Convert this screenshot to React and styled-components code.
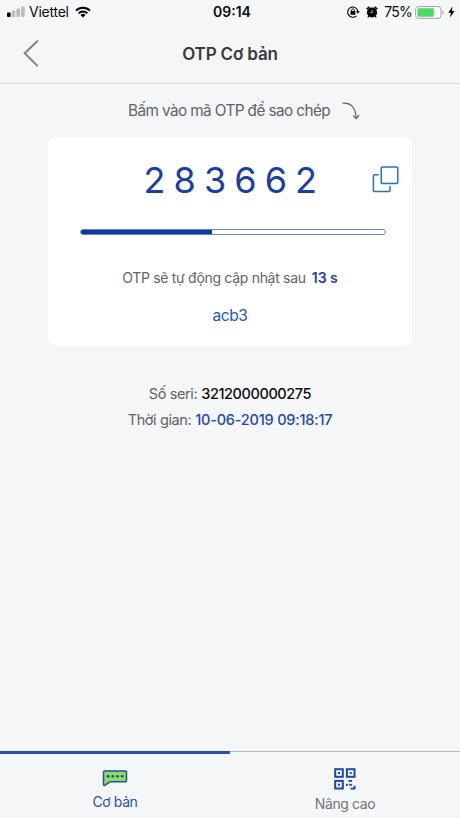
import { styled, createGlobalStyle } from "styled-components";

const GlobalStyle = createGlobalStyle`
  * {
    box-sizing: border-box;
  }

  body {
    margin: 0;
    background: #f4f6f8;
    font-family: Inter, "Noto Sans", sans-serif;
  }
`;

const Screen = styled.div`
  width: 100%;
  height: 100vh;
  overflow: hidden;

  display: flex;
  flex-direction: column;

  background: #f4f6f8;
`;

const StatusBar = styled.div`
  height: 24px;
  flex-shrink: 0;
  padding: 0 5px 0 7px;

  display: grid;
  grid-template-columns: 1fr auto 1fr;
  align-items: center;

  color: #0b0b0c;
  white-space: nowrap;
`;

const StatusGroup = styled.div`
  display: flex;
  align-items: center;
  justify-content: ${(props) => props.$align};

  svg {
    display: block;
    flex-shrink: 0;
  }
`;

const StatusGap = styled.span`
  width: ${(props) => props.$size};
`;

const Carrier = styled.span`
  margin: 0 6px 0 4px;
  font-size: 14px;
  line-height: 24px;
  letter-spacing: -0.25px;
`;

const Clock = styled.span`
  margin-left: 2px;
  font-size: 14px;
  font-weight: 600;
  line-height: 24px;
`;

const Percent = styled.span`
  margin: 0 3px 0 6px;
  font-size: 14px;
  line-height: 24px;
  letter-spacing: -0.8px;
`;

const Header = styled.div`
  height: 60px;
  flex-shrink: 0;
  padding: 0 22px;

  display: grid;
  grid-template-columns: 1fr auto 1fr;
  align-items: center;

  border-bottom: 1px solid #d9dce0;
`;

const BackButton = styled.button`
  padding: 0;
  border: none;
  background: none;
  justify-self: start;

  svg {
    display: block;
  }
`;

const Title = styled.div`
  color: #38393c;
  font-size: 17px;
  font-weight: 600;
  line-height: 24px;
  letter-spacing: -0.15px;
`;

const Body = styled.div`
  flex: 1;
  display: flex;
  flex-direction: column;
  align-items: center;
`;

const Hint = styled.div`
  height: 53px;
  padding-left: 28px;

  display: flex;
  align-items: center;
  gap: 12px;

  color: #626367;
  font-size: 15.3px;
  letter-spacing: -0.58px;
  white-space: nowrap;
`;

const Card = styled.div`
  width: 364px;
  height: 209px;

  display: flex;
  flex-direction: column;
  align-items: center;

  border-radius: 9px;
  background: #ffffff;
`;

const CodeRow = styled.div`
  width: 100%;
  height: 85px;
  padding: 0 13px 0 95.5px;

  display: flex;
  align-items: center;
  justify-content: space-between;
`;

const Code = styled.div`
  color: #1840a0;
  font-size: 36px;
  font-weight: 400;
  line-height: 44px;
  letter-spacing: 8.1px;
`;

const Track = styled.div`
  width: 306px;
  height: 6px;
  margin-top: 7px;
  margin-left: 5px;
  flex-shrink: 0;
  overflow: hidden;

  border: 1px solid #6b85c4;
  border-radius: 3px;
  background: #ffffff;
`;

const Bar = styled.div`
  height: 100%;
  background: #0d38a0;
  box-shadow: 0 0 0 1px #0d38a0;
`;

const Countdown = styled.div`
  margin-top: 33px;

  display: flex;
  gap: 6px;

  color: #626367;
  font-size: 14px;
  line-height: 20px;
  letter-spacing: -0.3px;
  white-space: nowrap;
`;

const Seconds = styled.span`
  color: #1d40a4;
  font-weight: 600;
  letter-spacing: 0;
`;

const Account = styled.div`
  margin-top: 18px;
  color: #2159c0;
  font-size: 15.5px;
  line-height: 20px;
  letter-spacing: -0.4px;
`;

const InfoList = styled.div`
  margin-top: 35px;
  display: flex;
  flex-direction: column;
  align-items: center;
`;

const InfoRow = styled.div`
  display: flex;
  gap: 4px;

  color: #626367;
  font-size: 14.5px;
  font-weight: 400;
  line-height: 26px;
  letter-spacing: -0.4px;
  white-space: nowrap;
`;

const InfoValue = styled.span`
  color: ${(props) => props.$color};
  font-weight: 500;
  letter-spacing: ${(props) => props.$spacing};
`;

const TabBar = styled.div`
  height: 67px;
  flex-shrink: 0;
  display: grid;
  grid-template-columns: 1fr 1fr;
`;

const Tab = styled.div`
  display: flex;
  flex-direction: column;
  align-items: center;

  border-top: ${(props) => (props.$active ? "3px solid #2a50ae" : "1px solid #b4b8bd")};
  color: ${(props) => (props.$active ? "#2a4fae" : "#747579")};
  font-size: 14px;
  line-height: 20px;
  letter-spacing: -0.4px;
`;

const TabIcon = styled.div`
  height: ${(props) => (props.$active ? "38px" : "42px")};
  padding-top: 16px;

  svg {
    display: block;
  }
`;

function SignalIcon() {
  return (
    <svg width="18" height="12" viewBox="0 0 18 12">
      <rect x="0" y="6.5" width="3.6" height="4.5" rx="1" fill="#000" />
      <rect x="4.7" y="4.5" width="3.6" height="6.5" rx="1" fill="#b9bbbf" />
      <rect x="9.4" y="2.5" width="3.6" height="8.5" rx="1" fill="#b9bbbf" />
      <rect x="14.1" y="0.5" width="3.6" height="10.5" rx="1" fill="#b9bbbf" />
    </svg>
  );
}

function WifiIcon() {
  return (
    <svg width="16" height="12" viewBox="0 0 16 12" fill="none" stroke="#000" strokeWidth="2">
      <path d="M1 4.6a10 10 0 0 1 14 0" />
      <path d="M3.6 7.4a6.2 6.2 0 0 1 8.8 0" />
      <path d="M8 11.6 5.5 9.1a3.5 3.5 0 0 1 5 0Z" fill="#000" stroke="none" />
    </svg>
  );
}

function LockRotationIcon() {
  return (
    <svg width="13" height="12" viewBox="0 0 13 12" fill="none" stroke="#000">
      <path d="M9.4 9.8a5.1 5.1 0 1 1 1.5-4.2" strokeWidth="1.1" />
      <path d="M8.9 5.2h3.9l-1.9 2.6Z" fill="#000" stroke="none" />
      <rect x="3.5" y="5.1" width="4.8" height="3.7" rx="0.5" fill="#000" stroke="none" />
      <path d="M4.5 5.4V4.3a1.4 1.4 0 0 1 2.8 0v1.1" strokeWidth="0.9" />
    </svg>
  );
}

function AlarmIcon() {
  return (
    <svg width="12" height="12" viewBox="0 0 12 12">
      <circle cx="6" cy="6.4" r="5" />
      <path d="M0.7 3.2 3.4 0.9M11.3 3.2 8.6 0.9" stroke="#000" strokeWidth="1.6" />
      <path d="M2.8 10 1.8 11.4M9.2 10l1 1.4" stroke="#000" strokeWidth="1.2" />
      <path d="M6.2 3.8v2.8H4.3" fill="none" stroke="#f4f6f8" strokeWidth="0.7" />
    </svg>
  );
}

function BatteryIcon() {
  return (
    <svg width="29" height="13" viewBox="0 0 29 13">
      <rect x="0.6" y="0.6" width="25.4" height="11.8" rx="3" fill="#fff" stroke="#a0a2a6" strokeWidth="1" />
      <path d="M4 2.2h14.8v8.6H4a1.7 1.7 0 0 1-1.7-1.7V3.9A1.7 1.7 0 0 1 4 2.2Z" fill="#4cd964" />
      <path d="M27.3 4.4q1.3.7 1.3 2.1t-1.3 2.1Z" fill="#a0a2a6" />
    </svg>
  );
}

function BoltIcon() {
  return (
    <svg width="7" height="12" viewBox="0 0 7 12">
      <path d="M4.6 0.4 0.3 6.8h2.6L2 11.6l4.6-6.7H3.9Z" />
    </svg>
  );
}

function BackIcon() {
  return (
    <svg width="17" height="28" viewBox="0 0 17 28" fill="none">
      <path d="M15.2 1.3 2.7 13.3l12.5 12.3" stroke="#808184" strokeWidth="2" strokeLinecap="round" />
    </svg>
  );
}

function CurvedArrowIcon() {
  return (
    <svg width="18" height="18" viewBox="0 0 18 18" fill="none" stroke="#626367" strokeWidth="1.2" strokeLinecap="round">
      <path d="M1 1.2c7-1 12.7 4 13.2 15" />
      <path d="M11.4 13.9l2.8 2.7 2.6-3.1" />
    </svg>
  );
}

function CopyIcon() {
  return (
    <svg width="27" height="27" viewBox="0 0 27 27" fill="none" stroke="#2474bc" strokeWidth="1.5">
      <rect x="9.2" y="1" width="16.6" height="16.4" rx="1" />
      <path d="M6.8 8.8H2.4a1 1 0 0 0-1 1v14.6a1 1 0 0 0 1 1H17a1 1 0 0 0 1-1V20" />
    </svg>
  );
}

function ChatIcon() {
  return (
    <svg width="26" height="17" viewBox="0 0 26 17">
      <path
        d="M2.4 1h21.2q.9 0 .9.9v9q0 .9-.9.9H8L3.2 15.2q-1.7.8-1.7-.9V1.9q0-.9.9-.9Z"
        fill="#8edb62"
        stroke="#22529a"
        strokeWidth="1.5"
        strokeLinejoin="round"
      />
      <g fill="#17479a">
        <circle cx="6.1" cy="6.3" r="1.3" />
        <circle cx="10.8" cy="6.3" r="1.3" />
        <circle cx="15.5" cy="6.3" r="1.3" />
        <circle cx="20.2" cy="6.3" r="1.3" />
      </g>
    </svg>
  );
}

function QrIcon() {
  return (
    <svg width="22" height="22" viewBox="0 0 22 22" fill="#1c47aa">
      <g fill="none" stroke="#1c47aa" strokeWidth="2">
        <rect x="1.2" y="1.2" width="7.6" height="7.6" />
        <rect x="12.9" y="1.2" width="7.6" height="7.6" />
        <rect x="1.2" y="12.9" width="7.6" height="7.6" />
      </g>
      <rect x="4" y="4" width="2" height="2" />
      <rect x="15.7" y="4" width="2" height="2" />
      <rect x="4" y="15.7" width="2" height="2" />
      <rect x="14.4" y="12" width="3.6" height="1.8" />
      <rect x="12" y="15.8" width="1.8" height="2.2" />
      <rect x="15.2" y="15.8" width="2.6" height="2" />
      <path d="M19.6 17.8h1.9v3.7h-5v-1.8h3.1Z" />
    </svg>
  );
}

export default function App() {
  const progress = 43;

  return (
    <>
      <GlobalStyle />
      <Screen>
        <StatusBar>
          <StatusGroup $align="flex-start">
            <SignalIcon />
            <Carrier>Viettel</Carrier>
            <WifiIcon />
          </StatusGroup>
          <Clock>09:14</Clock>
          <StatusGroup $align="flex-end">
            <LockRotationIcon />
            <StatusGap $size="6.5px" />
            <AlarmIcon />
            <Percent>75%</Percent>
            <BatteryIcon />
            <StatusGap $size="4px" />
            <BoltIcon />
          </StatusGroup>
        </StatusBar>

        <Header>
          <BackButton>
            <BackIcon />
          </BackButton>
          <Title>OTP Cơ bản</Title>
        </Header>

        <Body>
          <Hint>
            Bấm vào mã OTP để sao chép
            <CurvedArrowIcon />
          </Hint>
          <Card>
            <CodeRow>
              <Code>283662</Code>
              <CopyIcon />
            </CodeRow>
            <Track>
              <Bar style={{ width: `${progress}%` }} />
            </Track>
            <Countdown>
              OTP sẽ tự động cập nhật sau
              <Seconds>13 s</Seconds>
            </Countdown>
            <Account>acb3</Account>
          </Card>

          <InfoList>
            <InfoRow>
              Số seri:
              <InfoValue $color="#0e0e10" $spacing="-0.4px">3212000000275</InfoValue>
            </InfoRow>
            <InfoRow>
              Thời gian:
              <InfoValue $color="#2448ab" $spacing="-0.2px">10-06-2019 09:18:17</InfoValue>
            </InfoRow>
          </InfoList>
        </Body>

        <TabBar>
          <Tab $active>
            <TabIcon $active>
              <ChatIcon />
            </TabIcon>
            Cơ bản
          </Tab>
          <Tab>
            <TabIcon>
              <QrIcon />
            </TabIcon>
            Nâng cao
          </Tab>
        </TabBar>
      </Screen>
    </>
  );
}
